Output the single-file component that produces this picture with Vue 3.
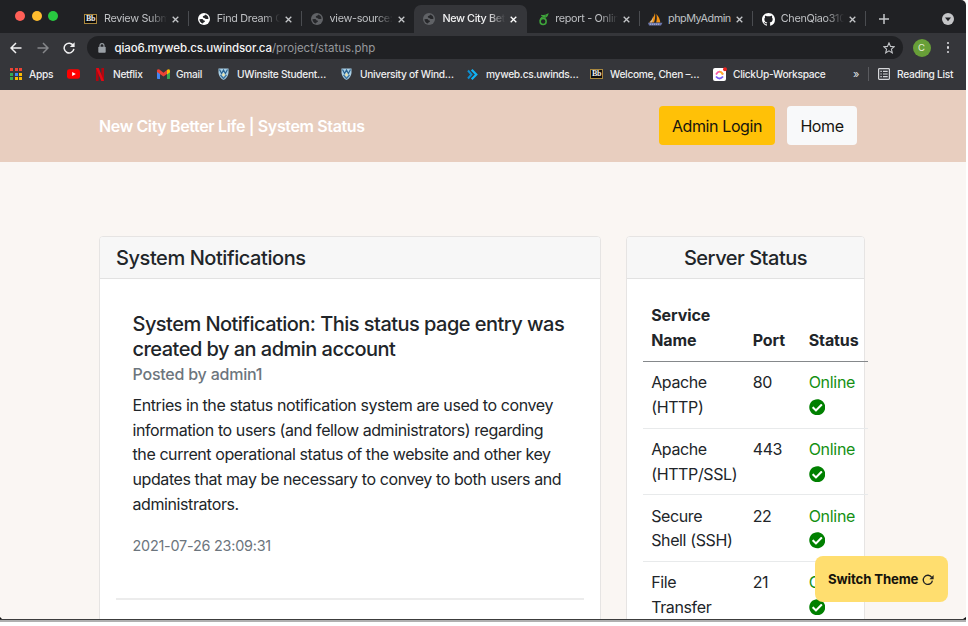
<script setup>
const tabs = [
  { icon: 'blackboard', title: 'Review Subm' },
  { icon: 'globe', title: 'Find Dream C', bright: true },
  { icon: 'globe', title: 'view-source:' },
  { icon: 'globe', title: 'New City Bet', active: true },
  { icon: 'leaf', title: 'report - Onlin' },
  { icon: 'pma', title: 'phpMyAdmin', full: true },
  { icon: 'github', title: 'ChenQiao310' },
]
const bookmarks = [
  { icon: 'apps', title: 'Apps' },
  { icon: 'youtube', title: '' },
  { icon: 'netflix', title: 'Netflix' },
  { icon: 'gmail', title: 'Gmail' },
  { icon: 'shield', title: 'UWinsite Student…' },
  { icon: 'shield', title: 'University of Wind…' },
  { icon: 'chev', title: 'myweb.cs.uwinds…' },
  { icon: 'blackboard', title: 'Welcome, Chen –…' },
  { icon: 'clickup', title: 'ClickUp-Workspace' },
]
const appColors = ['#ea4335', '#ea4335', '#ea4335', '#34a853', '#4285f4', '#fbbc05', '#34a853', '#fbbc05', '#fbbc05']
const services = [
  { a: 'Apache', b: '(HTTP)', port: 80 },
  { a: 'Apache', b: '(HTTP/SSL)', port: 443 },
  { a: 'Secure', b: 'Shell (SSH)', port: 22 },
  { a: 'File', b: 'Transfer', port: 21 },
]
const entry = [
  'Entries in the status notification system are used to convey',
  'information to users (and fellow administrators) regarding',
  'the current operational status of the website and other key',
  'updates that may be necessary to convey to both users and',
  'administrators.',
]
</script>

<template>
  <div class="window">
    <div class="tabstrip">
      <div class="lights"><i class="red"></i><i class="yellow"></i><i class="green"></i></div>
      <div v-for="(t, i) in tabs" :key="i" class="tab" :class="{ active: t.active, nosep: i === 2 }">
        <span class="fav">
          <span v-if="t.icon === 'blackboard'" class="bb">Bb</span>
          <svg v-else-if="t.icon === 'globe'" class="globe" :class="{ bright: t.bright }" viewBox="0 0 12 12">
            <circle cx="6" cy="6" r="6" />
            <path d="M7.600 1.600Q7.200 2.600 5.900 2.700Q4.600 2.900 4.800 4Q5 4.900 6.400 4.900Q7 6 8.200 6Q9.600 6.100 10.600 5.500Q10.500 3 7.600 1.600ZM1.400 6.200Q1.700 9.500 4.900 10.500Q5 9.600 6 9.300Q7.200 8.900 6.900 7.900Q6.600 7.200 5.400 7.200Q5.200 6.100 3.900 6.100Z" fill="#26272a" />
          </svg>
          <svg v-else-if="t.icon === 'leaf'" class="ic" viewBox="0 0 12 13">
            <circle cx="5.600" cy="8.600" r="3.300" fill="none" stroke="#3fa53b" stroke-width="1.700" />
            <path d="M2.400 8C2.800 5 5 3.200 8 2.600M3.400 1.800C5.600 2.600 8 2.200 10.600 .8C10 3.200 8 4.200 5.800 4" fill="none" stroke="#3fa53b" stroke-width="1.300" />
          </svg>
          <svg v-else-if="t.icon === 'pma'" class="pma" viewBox="0 0 15 13">
            <path d="M7 0C7.600 4 6.800 7 6 9.500H1C3.800 7 6 4 7 0ZM8.300 1C10.800 3.400 12 6.600 12.300 9.500H8.200C9 6.500 9 4 8.300 1Z" fill="#f29111" />
            <path d="M5 3C5 6 3.500 8 1.500 9.500H4C5 7 5.400 5 5 3Z" fill="#c9c3b4" />
            <path d="M0 9.800H14.500L13 12.600H1Z" fill="#6c78af" />
            <path d="M2 11.200H12" stroke="#c9cde6" stroke-width=".8" stroke-dasharray="1 1" />
          </svg>
          <svg v-else class="gh" viewBox="0 0 16 16">
            <path fill="#fff" d="M8 0C3.580 0 0 3.580 0 8c0 3.540 2.290 6.530 5.470 7.590.4.070.55-.17.55-.38 0-.19-.01-.82-.01-1.490-2.010.37-2.530-.49-2.690-.94-.09-.23-.48-.94-.82-1.130-.28-.15-.68-.52-.01-.53.63-.01 1.080.58 1.230.82.72 1.210 1.870.87 2.330.66.070-.52.28-.87.51-1.070-1.780-.2-3.640-.89-3.640-3.950 0-.87.31-1.590.82-2.150-.08-.2-.36-1.020.08-2.120 0 0 .67-.21 2.200.82.64-.18 1.320-.27 2-.27s1.360.09 2 .27c1.530-1.040 2.200-.82 2.200-.82.44 1.100.16 1.920.08 2.120.51.56.82 1.270.82 2.150 0 3.070-1.870 3.750-3.650 3.950.29.25.54.73.54 1.480 0 1.070-.01 1.930-.01 2.200 0 .21.15.46.55.38A8.010 8.010 0 0 0 16 8c0-4.420-3.580-8-8-8z" />
          </svg>
        </span>
        <span class="tabtitle" :class="{ full: t.full }">{{ t.title }}</span>
        <svg class="x" viewBox="0 0 8 8"><path d="M.8 .8L7.200 7.200M7.200 .8L.8 7.200" /></svg>
      </div>
      <svg class="plus" viewBox="0 0 10 10"><path d="M5 0V10M0 5H10" /></svg>
      <svg class="tabsearch" viewBox="0 0 12 12"><circle cx="6" cy="6" r="6" fill="#c5c6c8" /><path d="M3 4.500H9L6 8.300Z" fill="#202124" /></svg>
    </div>

    <div class="toolbar">
      <svg class="nav back" viewBox="0 0 12 12"><path d="M11.500 6H1.200M6 1L1 6L6 11" /></svg>
      <svg class="nav fwd" viewBox="0 0 12 12"><path d="M.5 6H10.800M6 1L11 6L6 11" /></svg>
      <svg class="nav reload" viewBox="0 0 12 12"><path d="M10.300 3.600A4.900 4.900 0 1 0 10.900 6.800" /><path class="solid" d="M11.600 .3V5.100H6.800Z" /></svg>
      <div class="omnibox">
        <svg class="lock" viewBox="0 0 8 10"><rect x=".3" y="3.800" width="7.400" height="5.900" rx=".8" fill="#9aa0a6" /><path d="M2 4V2.600A2 2 0 0 1 6 2.600V4" fill="none" stroke="#9aa0a6" stroke-width="1.100" /></svg>
        <span class="url"><b>qiao6.myweb.cs.uwindsor.ca</b>/project/status.php</span>
        <svg class="star" viewBox="0 0 12 12"><path d="M6 .9L7.500 4.400L11.300 4.700L8.400 7.200L9.300 10.900L6 8.900L2.700 10.900L3.600 7.200L.7 4.700L4.500 4.400Z" /></svg>
      </div>
      <span class="avatar">C</span>
      <span class="dots"><i></i><i></i><i></i></span>
    </div>

    <div class="bookmarks">
      <div v-for="(b, i) in bookmarks" :key="i" class="bm">
        <span v-if="b.icon === 'blackboard'" class="bb">Bb</span>
        <span v-else-if="b.icon === 'apps'" class="apps"><i v-for="(c, k) in appColors" :key="k" :style="{ background: c }"></i></span>
        <svg v-else-if="b.icon === 'youtube'" class="yt" viewBox="0 0 13 10"><rect width="13" height="9.600" y=".2" rx="2.300" fill="#f00" /><path d="M5.200 3V7L8.800 5Z" fill="#fff" /></svg>
        <svg v-else-if="b.icon === 'netflix'" class="nf" viewBox="0 0 8 13"><path d="M0 0H2.600V13L0 13ZM5.400 0H8V13H5.400Z" fill="#b1060f" /><path d="M0 0H2.700L8 13H5.300Z" fill="#e50914" /></svg>
        <svg v-else-if="b.icon === 'gmail'" class="gm" viewBox="0 0 13 10"><path d="M0 2V9.200Q0 10 .8 10H3V4Z" fill="#4285f4" /><path d="M13 2V9.200Q13 10 12.200 10H10V4Z" fill="#34a853" /><path d="M0 1.600Q.3-.4 2.400 .5L6.500 3.700L10.600 .5V4.600L6.500 7.500L0 3Z" fill="#ea4335" /><path d="M10 1Q12.400-.6 13 1.600V3.200L10 5.500Z" fill="#fbbc04" /></svg>
        <svg v-else-if="b.icon === 'shield'" class="sh" viewBox="0 0 11 12"><path d="M.5 .5H10.500V5Q10 9.500 5.500 12Q1 9.500 .5 5Z" fill="#a9cfe6" /><path d="M1.500 1.500L3.600 5.500L5.500 2L7.400 5.500L9.500 1.500" fill="none" stroke="#2a6390" stroke-width="1.200" /><path d="M2.500 7L5.500 10.500L8.500 7" fill="none" stroke="#3c7199" stroke-width="1.200" /><path d="M4.500 5.500H6.500V8H4.500Z" fill="#f1e3a0" /></svg>
        <svg v-else-if="b.icon === 'chev'" class="cv" viewBox="0 0 11 11"><path d="M1 1.500L4.500 5.500L1 9.500" fill="none" stroke="#0d8fd0" stroke-width="2" /><path d="M4.700 .8L9.300 5.500L4.700 10.200" fill="none" stroke="#12b4f5" stroke-width="2.200" /></svg>
        <svg v-else class="cu" viewBox="0 0 14 14"><rect y="1" width="13" height="13" rx="2" fill="#fff" /><path d="M3 7.500Q6.500 1.800 10 7.500" fill="none" stroke="#f85aa5" stroke-width="1.900" /><path d="M3 9.500Q6.500 13.600 10 9.500" fill="none" stroke="#7a5cf5" stroke-width="1.900" /><path d="M6.500 4.600Q8.600 4.800 10 7.500" fill="none" stroke="#ffb526" stroke-width="1.900" /><circle cx="12" cy="2.200" r="2" fill="#e8201c" /></svg>
        <span class="bmt">{{ b.title }}</span>
      </div>
      <span class="more">»</span>
      <div class="reading">
        <svg class="rl" viewBox="0 0 12 12"><rect x=".6" y=".6" width="10.800" height="10.800" rx=".8" /><path d="M2.400 3.400H3.800M5 3.400H9.700M2.400 6H3.800M5 6H9.700M2.400 8.600H3.800M5 8.600H9.700" /></svg>
        <span class="bmt">Reading List</span>
      </div>
    </div>

    <header class="hero">
      <span class="brand">New City Better Life | System Status</span>
      <span class="btn warn">Admin Login</span>
      <span class="btn light">Home</span>
    </header>

    <main class="page">
      <section class="card notes">
        <h5 class="cardhead">System Notifications</h5>
        <div class="notebody">
          <h5 class="title">System Notification: This status page entry was<br>created by an admin account</h5>
          <h6 class="by">Posted by admin1</h6>
          <p class="entry"><span v-for="(l, i) in entry" :key="i">{{ l }}</span></p>
          <div class="date">2021-07-26 23:09:31</div>
        </div>
        <div class="rule"></div>
      </section>

      <section class="card servers">
        <h5 class="cardhead">Server Status</h5>
        <div class="table">
          <div class="row head"><span>Service<br>Name</span><span>Port</span><span>Status</span></div>
          <div v-for="s in services" :key="s.port" class="row">
            <span>{{ s.a }}<br>{{ s.b }}</span>
            <span>{{ s.port }}</span>
            <span class="online">Online
              <svg viewBox="0 0 512 512"><path fill="green" d="M504 256c0 136.967-111.033 248-248 248S8 392.967 8 256 119.033 8 256 8s248 111.033 248 248zM227.314 387.314l184-184c6.248-6.248 6.248-16.379 0-22.627l-22.627-22.627c-6.248-6.249-16.379-6.249-22.628 0L216 308.118l-70.059-70.059c-6.248-6.248-16.379-6.248-22.628 0l-22.627 22.627c-6.248 6.248-6.248 16.379 0 22.627l104 104c6.249 6.249 16.379 6.249 22.628.001z" /></svg>
            </span>
          </div>
        </div>
      </section>
    </main>

    <div class="theme"><span>Switch Theme</span>
      <svg viewBox="0 0 12 12"><path d="M9.700 3.300A4.600 4.600 0 1 0 10.400 6.600" fill="none" stroke="#222" stroke-width="1.300" /><path d="M11.600 1V5.200H7.400Z" fill="#222" /></svg>
    </div>
    <i class="corner cl"></i><i class="corner cr"></i>
  </div>
</template>

<style>
body { margin: 0; background: #fff; overflow: hidden; }
</style>

<style scoped>
* { box-sizing: border-box; }
.window { position: relative; width: 966px; height: 622px; overflow: hidden; background: #faf6f3; font-family: Inter, "Liberation Sans", sans-serif; color: #212529; display: flex; flex-direction: column; }
.window::after { content: ""; position: absolute; left: 0; right: 0; bottom: 0; height: 2px; background: #b0b0b0; border-top: 1px solid #3c3c3c; }
svg { display: block; flex: none; }
h5, h6, p { margin: 0; font-weight: 500; }

.tabstrip { height: 33px; flex: none; background: #202124; display: flex; align-items: flex-end; border-radius: 0 5px 0 0; }
.lights { width: 76px; height: 33px; padding: 11px 0 0 15px; display: flex; gap: 6.500px; flex: none; }
.lights i { width: 10px; height: 10px; border-radius: 50%; }
.red { background: #ff5f57; }
.yellow { background: #febc2e; }
.green { background: #28c840; }
.tab { width: 112.800px; height: 28px; flex: none; display: flex; align-items: center; padding: 0 8px; background: linear-gradient(#4a4c50, #4a4c50) right 6px / 1px 15px no-repeat; }
.tab.nosep { background: none; }
.tab.active { background: #35363a; border-radius: 7px 7px 0 0; }
.fav { width: 20px; flex: none; display: flex; }
.bb { width: 13px; height: 10px; border: 1px solid #a8873e; background: #0b0b0b; color: #eee; font: bold 8px/8px "Liberation Serif", serif; text-align: center; letter-spacing: -.5px; flex: none; }
.globe { width: 12px; height: 12px; fill: #606266; margin-left: 1px; }
.globe.bright { fill: #fff; }
.ic { width: 11px; height: 13px; margin-left: 3px; }
.pma { width: 15px; height: 13px; }
.gh { width: 13px; height: 13px; margin-left: 1px; }
.tabtitle { width: 65px; flex: none; white-space: nowrap; font-size: 10.800px; line-height: 16px; color: #bfc1c4; letter-spacing: -.3px; -webkit-mask-image: linear-gradient(90deg, #000 70%, transparent 97%); mask-image: linear-gradient(90deg, #000 70%, transparent 97%); }
.tabtitle.full { -webkit-mask-image: none; mask-image: none; letter-spacing: -.45px; }
.active .tabtitle { color: #f1f1f2; font-weight: 500; letter-spacing: -.36px; }
.x { width: 7px; height: 7px; margin-left: 3px; fill: none; stroke: #c4c6c9; stroke-width: 1.500; }
.active .x { stroke: #fff; }
.plus { width: 10px; height: 10px; margin: 0 0 9px 13px; stroke: #c4c6c9; stroke-width: 1.500; }
.tabsearch { width: 12px; height: 12px; margin: 0 12px 8px auto; }

.toolbar { height: 29px; flex: none; background: #35363a; display: flex; align-items: center; padding-left: 10px; }
.nav { width: 12px; height: 12px; fill: none; stroke: #f1f1f2; stroke-width: 1.500; }
.fwd { margin-left: 15px; stroke: #85878a; }
.reload { margin-left: 14px; }
.reload .solid { fill: #f1f1f2; stroke: none; }
.omnibox { width: 816px; height: 23px; margin-left: 12px; border-radius: 12px; background: #202124; display: flex; align-items: center; padding: 0 8px 0 11px; flex: none; }
.lock { width: 8px; height: 10px; margin-right: 8.500px; }
.url { font-size: 11.500px; line-height: 16px; color: #96989c; white-space: nowrap; }
.url b { font-weight: 500; color: #f4f4f5; letter-spacing: -.12px; }
.star { width: 12px; height: 12px; margin-left: auto; fill: none; stroke: #c4c6c9; stroke-width: 1.100; }
.avatar { width: 18px; height: 18px; margin-left: 9.500px; border-radius: 50%; background: #689f38; color: #e6f0dc; font-size: 9.500px; line-height: 18px; text-align: center; flex: none; }
.dots { margin-left: 16px; display: flex; flex-direction: column; gap: 2px; }
.dots i { width: 2.500px; height: 2.500px; border-radius: 50%; background: #dcdde0; }

.bookmarks { height: 28px; flex: none; background: #35363a; display: grid; grid-template-columns: 57px 28px 62px 61px 123px 126px 123px 123px 140px 15px auto; align-items: center; padding: 0 0 4px 10px; }
.bm, .reading { display: flex; align-items: center; }
.bmt { font-size: 10.200px; line-height: 14px; color: #eeeeef; white-space: nowrap; letter-spacing: -.29px; font-weight: 500; }
.apps { width: 12px; height: 12px; flex: none; display: grid; grid-template-columns: repeat(3, 3px); gap: 1.500px; margin-right: 7px; }
.apps i { height: 3px; }
.yt { width: 13px; height: 10px; }
.nf { width: 8px; height: 13px; margin: 0 9px 0 1px; }
.gm { width: 13px; height: 10px; margin-right: 6px; }
.sh { width: 11px; height: 12px; margin-right: 8px; }
.cv { width: 11px; height: 11px; margin-right: 8px; }
.bm .bb { margin-right: 7px; }
.cu { width: 14px; height: 14px; margin: -1px 6px 0 0; }
.more { font-size: 11px; line-height: 14px; color: #dfe0e2; }
.reading { height: 14px; border-left: 1px solid #5a5b5f; padding-left: 9px; }
.rl { width: 12px; height: 12px; margin-right: 7px; fill: none; stroke: #d6d7da; stroke-width: 1.200; }

.hero { height: 71.500px; flex: none; background: #e8cebf; display: flex; align-items: center; padding: 0 109px 0 99px; }
.brand { font-size: 16px; font-weight: 600; color: #fff; white-space: nowrap; letter-spacing: -.36px; margin-right: auto; }
.btn { height: 39px; border-radius: 4px; display: flex; align-items: center; justify-content: center; font-size: 16px; white-space: nowrap; letter-spacing: -.4px; color: #16150f; }
.warn { width: 116px; background: #ffc107; margin-right: 12px; }
.light { width: 70px; background: #f8f9fa; }

.page { height: 458px; padding: 74px 101px 0 99px; display: flex; justify-content: space-between; align-items: flex-start; }
.card { height: 420px; background: #fff; border: 1px solid #e6e4e3; border-radius: 4px; }
.cardhead { height: 42px; background: #f7f7f7; border-bottom: 1px solid #e2e2e2; border-radius: 3px 3px 0 0; font-size: 20px; line-height: 42px; letter-spacing: -.43px; white-space: nowrap; }
.notes { width: 502px; }
.notes .cardhead { padding-left: 16px; }
.notebody { padding: 33.500px 0 0 32.500px; }
.title { font-size: 20px; line-height: 24.700px; letter-spacing: -.53px; white-space: nowrap; }
.by { margin-top: 3px; font-size: 16px; line-height: 20px; color: #6c757d; letter-spacing: -.22px; }
.entry { margin-top: 8.500px; font-size: 16px; font-weight: 400; line-height: 24.700px; letter-spacing: -.41px; white-space: nowrap; }
.entry span { display: block; }
.date { margin-top: 20px; font-size: 14.400px; line-height: 20px; color: #6c757d; letter-spacing: -.22px; }
.rule { margin: 42px 16px 0; height: 2px; background: #ececec; }
.servers { width: 239px; }
.servers .cardhead { text-align: center; letter-spacing: -.48px; }
.table { margin: 16px 0 0 16px; width: 225px; font-size: 16px; line-height: 24.700px; letter-spacing: -.38px; }
.row { display: grid; grid-template-columns: 101.500px 56px 67.500px; padding: 8.200px 0 8.200px 8.200px; height: 66.700px; border-bottom: 1px solid #e8eaeb; white-space: nowrap; }
.row.head { height: 67.500px; font-weight: 700; align-items: end; border-bottom: 1.500px solid #85888b; letter-spacing: -.1px; }
.online { color: #149014; white-space: normal; width: 50px; letter-spacing: -.3px; }
.online svg { width: 16.500px; height: 16.500px; margin-top: 4px; }

.theme { position: absolute; left: 814.500px; top: 556px; width: 133.500px; height: 46px; border-radius: 8px; background: #ffde6f; display: flex; align-items: center; padding-left: 13.500px; font-size: 13.200px; font-weight: 700; color: #15130b; white-space: nowrap; letter-spacing: -.14px; }
.theme svg { width: 12px; height: 12px; margin: 2px 0 0 3.500px; }
.corner { position: absolute; bottom: 1px; width: 0; height: 0; border-bottom: 4px solid #111; }
.cl { left: 0; border-right: 4px solid transparent; }
.cr { right: 0; border-left: 6px solid transparent; }
</style>
